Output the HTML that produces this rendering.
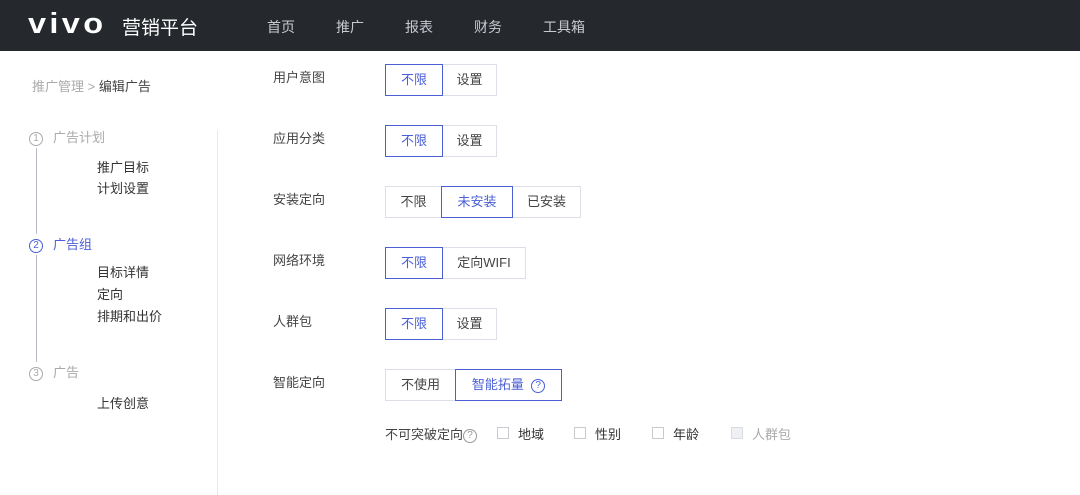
<!DOCTYPE html>
<html><head><meta charset="utf-8"><style>
*{margin:0;padding:0;box-sizing:border-box}
body{width:1080px;height:495px;background:#fff;font-family:"Liberation Sans","Noto Sans CJK SC",sans-serif;font-size:13px;color:#333;position:relative;overflow:hidden}
.hd{position:absolute;left:0;top:0;width:1080px;height:51px;background:#25282d;color:#fff}
.abs{position:absolute;white-space:nowrap}
.nav{color:#c8cad0;font-size:14px;top:17px}
.lbl{left:273px;color:#444;font-size:13px}
.btn{position:absolute;height:32px;border:1px solid #dcdfe6;background:#fff;color:#444;font-size:13px;line-height:30px;text-align:center}
.on{border-color:#4a5fd6;color:#4a5fd6;z-index:2}
.cb{position:absolute;width:12px;height:12px;border:1px solid #c8cad0;top:427px}
.gray{color:#aaa}
.num{display:inline-block;width:14px;height:14px;border:1px solid currentColor;border-radius:50%;font-size:10px;line-height:12px;text-align:center;margin-right:10px;vertical-align:1px}
</style></head><body>
<div class="hd">
<div class="abs" style="left:28px;top:8px;font-size:29px;font-weight:bold;letter-spacing:3px;transform:scaleX(1.12);transform-origin:left">vivo</div>
<div class="abs" style="left:122px;top:13px;font-size:19px">营销平台</div>
<div class="abs nav" style="left:267px">首页</div>
<div class="abs nav" style="left:336px">推广</div>
<div class="abs nav" style="left:405px">报表</div>
<div class="abs nav" style="left:474px">财务</div>
<div class="abs nav" style="left:543px">工具箱</div>
</div>
<div class="abs gray" style="left:32px;top:76px">推广管理 &gt; <span style="color:#444">编辑广告</span></div>
<div class="abs" style="left:217px;top:130px;width:1px;height:365px;background:#e8e8e8"></div>
<div class="abs" style="left:36px;top:140px;width:1px;height:225px;background:#b8bcc8"></div>
<div class="abs gray" style="left:29px;top:127px;background:#fff;padding-bottom:2px"><span class="num">1</span>广告计划</div>
<div class="abs" style="left:97px;top:157px;line-height:21px">推广目标<br>计划设置</div>
<div class="abs" style="left:29px;top:234px;color:#4a5fd6;background:#fff;padding-bottom:2px"><span class="num">2</span>广告组</div>
<div class="abs" style="left:97px;top:262px;line-height:22px">目标详情<br>定向<br>排期和出价</div>
<div class="abs gray" style="left:29px;top:362px;background:#fff"><span class="num">3</span>广告</div>
<div class="abs" style="left:97px;top:393px">上传创意</div>

<div class="abs lbl" style="top:67px">用户意图</div>
<div class="btn on" style="left:385px;top:64px;width:58px">不限</div>
<div class="btn" style="left:442px;top:64px;width:55px">设置</div>

<div class="abs lbl" style="top:128px">应用分类</div>
<div class="btn on" style="left:385px;top:125px;width:58px">不限</div>
<div class="btn" style="left:442px;top:125px;width:55px">设置</div>

<div class="abs lbl" style="top:189px">安装定向</div>
<div class="btn" style="left:385px;top:186px;width:57px">不限</div>
<div class="btn on" style="left:441px;top:186px;width:72px">未安装</div>
<div class="btn" style="left:512px;top:186px;width:69px">已安装</div>

<div class="abs lbl" style="top:250px">网络环境</div>
<div class="btn on" style="left:385px;top:247px;width:58px">不限</div>
<div class="btn" style="left:442px;top:247px;width:84px">定向WIFI</div>

<div class="abs lbl" style="top:311px">人群包</div>
<div class="btn on" style="left:385px;top:308px;width:58px">不限</div>
<div class="btn" style="left:442px;top:308px;width:55px">设置</div>

<div class="abs lbl" style="top:372px">智能定向</div>
<div class="btn" style="left:385px;top:369px;width:71px">不使用</div>
<div class="btn on" style="left:455px;top:369px;width:107px">智能拓量 &nbsp;<span class="num" style="margin:0">?</span></div>

<div class="abs" style="left:385px;top:424px;color:#444">不可突破定向<span class="num" style="margin:0;color:#999">?</span></div>
<div class="cb" style="left:497px"></div><div class="abs" style="left:518px;top:424px">地域</div>
<div class="cb" style="left:574px"></div><div class="abs" style="left:595px;top:424px">性别</div>
<div class="cb" style="left:652px"></div><div class="abs" style="left:673px;top:424px">年龄</div>
<div class="cb" style="left:731px;background:#eef0f4;border-color:#d8dbe2"></div><div class="abs gray" style="left:752px;top:424px">人群包</div>
</body></html>
